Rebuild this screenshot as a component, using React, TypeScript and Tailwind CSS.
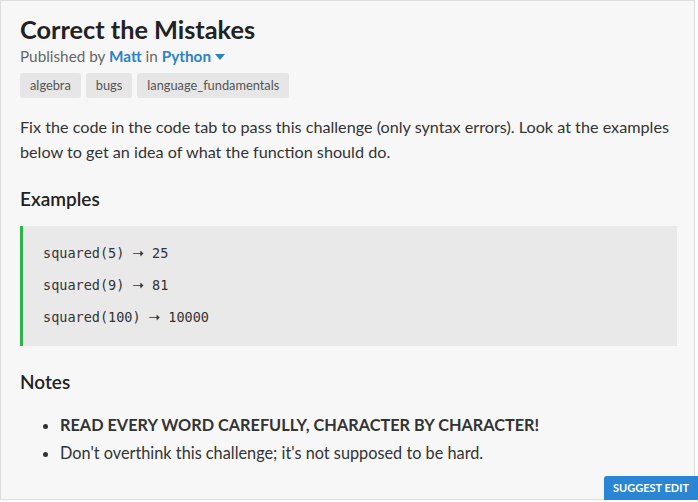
export default function App() {
    const examples = [
        ['squared(5)', '25'],
        ['squared(9)', '81'],
        ['squared(100)', '10000'],
    ]

    return (
        <div className="w-[698px] h-[502px] bg-white font-['Lato',sans-serif]">
            <div className="relative w-[695px] h-[500px] bg-[#f7f7f7] border border-[#dedede] px-[19px] pt-[12px]">
                {/* Header */}
                <h1 className="text-[25.3px] font-bold text-[#222] leading-[32px]">Correct the Mistakes</h1>
                <p className="text-[15.3px] text-[#666] leading-[20px] mt-[1px]">
                    Published by <span className="font-bold text-[#2c82c9]">Matt</span> in{' '}
                    <span className="font-bold text-[#2c82c9]">Python</span>
                    <svg className="inline-block ml-[4px] mb-[2px]" width="10" height="6" viewBox="0 0 10 6">
                        <path d="M0 0 L10 0 L5 6 Z" fill="#2c82c9" />
                    </svg>
                </p>
                <div className="flex gap-[5px] mt-[7px]">
                    {['algebra', 'bugs', 'language_fundamentals'].map((t) => (
                        <span key={t} className="bg-[#e6e6e6] rounded-[3px] px-[10px] h-[25px] flex items-center text-[12.8px] text-[#555]">
                            {t}
                        </span>
                    ))}
                </div>

                {/* Description */}
                <p className="text-[16.2px] text-[#333] leading-[25px] mt-[16px]">
                    Fix the code in the code tab to pass this challenge (only syntax errors). Look at the examples below to get an idea of what the function should do.
                </p>

                <h2 className="text-[19px] font-semibold text-[#222] leading-[24px] mt-[23px]">Examples</h2>
                <div className="mt-[15px] w-[657px] bg-[#e9e9e9] border-l-[3px] border-[#2cb34a] pl-[20px] pt-[11px] pb-[13px] font-['DejaVu_Sans_Mono',monospace] text-[13.5px] text-[#333]">
                    {examples.map(([call, res]) => (
                        <div key={call} className="h-[32px] flex items-center">
                            {call}
                            <span className="mx-[8px] font-['DejaVu_Sans',sans-serif] font-bold text-[14px]">➝</span>
                            {res}
                        </div>
                    ))}
                </div>

                <h2 className="text-[19px] font-semibold text-[#222] leading-[24px] mt-[24px]">Notes</h2>
                <ul className="list-disc pl-[40px] mt-[17px] text-[16.3px] text-[#333] leading-[28px]">
                    <li className="font-bold">READ EVERY WORD CAREFULLY, CHARACTER BY CHARACTER!</li>
                    <li>Don't overthink this challenge; it's not supposed to be hard.</li>
                </ul>

                <button className="absolute right-[-4px] bottom-[-1px] w-[94px] h-[24px] bg-[#2a85d3] text-white text-[11px] font-bold rounded-tl-[3px]">
                    SUGGEST EDIT
                </button>
            </div>
        </div>
    )
}
